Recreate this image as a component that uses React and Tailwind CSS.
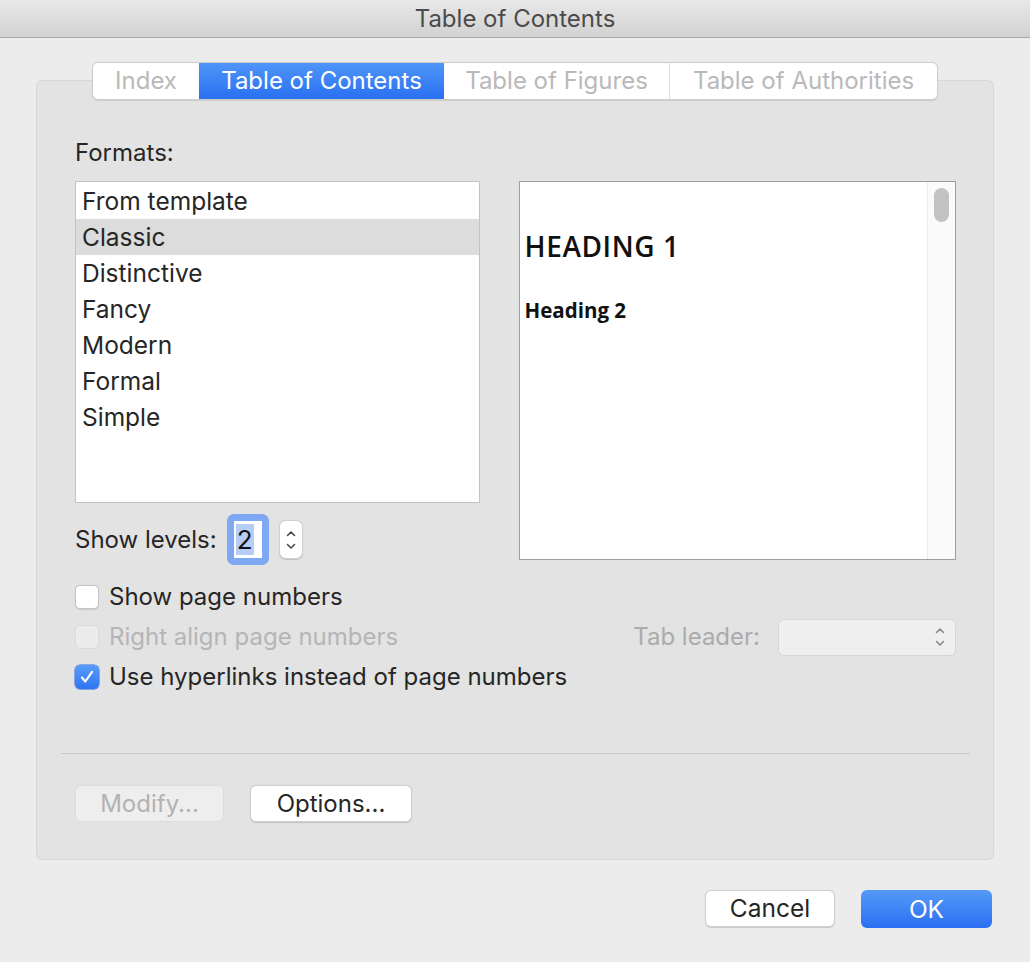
import React from "react";

const font = { fontFamily: "Inter, 'Helvetica Neue', Arial, sans-serif" };

function Checkbox({ checked, disabled }) {
  if (checked) {
    return (
      <div className="w-[24px] h-[24px] rounded-[5px] bg-gradient-to-b from-[#5a9cf9] to-[#2f74f1] flex items-center justify-center shadow-[0_0_0_0.5px_#2a66d8]">
        <svg width="18" height="18" viewBox="0 0 16 16" fill="none">
          <path d="M3.5 8.5 L6.5 12 L12.5 3.5" stroke="white" strokeWidth="1.9" strokeLinecap="round" strokeLinejoin="round" />
        </svg>
      </div>
    );
  }
  return (
    <div
      className={
        "w-[24px] h-[24px] rounded-[5px] border " +
        (disabled ? "bg-[#ececec] border-[#dadada]" : "bg-white border-[#c4c4c4] shadow-[0_0.5px_1px_rgba(0,0,0,0.12)]")
      }
    />
  );
}

function UpDown({ color = "#4a4a4a" }) {
  return (
    <svg width="12" height="26" viewBox="0 0 12 26" fill="none">
      <path d="M2.5 8.5 L6 5 L9.5 8.5" stroke={color} strokeWidth="1.6" strokeLinecap="round" strokeLinejoin="round" />
      <path d="M2.5 17.5 L6 21 L9.5 17.5" stroke={color} strokeWidth="1.6" strokeLinecap="round" strokeLinejoin="round" />
    </svg>
  );
}

export default function App() {
  const formats = ["From template", "Classic", "Distinctive", "Fancy", "Modern", "Formal", "Simple"];
  return (
    <div className="w-[1030px] h-[962px] bg-[#ececec] text-[#262626] overflow-hidden" style={font}>
      {/* Title bar */}
      <div className="h-[38px] bg-gradient-to-b from-[#e8e8e8] to-[#d2d2d2] border-b border-[#a8a8a8] flex items-center justify-center">
        <span className="text-[24px] text-[#4b4b4b] leading-none">Table of Contents</span>
      </div>

      <div className="px-[36px] pt-[24px]">
        {/* Tabs */}
        <div className="relative z-10 flex justify-center h-[38px]">
          <div className="flex h-[38px] rounded-[6px] border border-[#cdcdcd] bg-white overflow-hidden shadow-[0_0.5px_1px_rgba(0,0,0,0.1)] text-[24px] leading-none">
            <div className="w-[106px] flex items-center justify-center text-[#b9b9b9]">Index</div>
            <div className="w-[245px] flex items-center justify-center text-white bg-gradient-to-b from-[#4f95f8] to-[#2a6ff1]">Table of Contents</div>
            <div className="w-[226px] flex items-center justify-center text-[#b9b9b9] border-r border-[#e0e0e0]">Table of Figures</div>
            <div className="w-[267px] flex items-center justify-center text-[#b9b9b9]">Table of Authorities</div>
          </div>
        </div>

        {/* Panel */}
        <div className="-mt-[20px] h-[780px] bg-[#e3e3e3] border border-[#d8d8d8] rounded-[6px] pl-[38px] pr-[37px] pt-[57px] pb-[37px] flex flex-col">
          <div className="h-[30px] flex items-center text-[24px] leading-none">Formats:</div>
          <div className="mt-[14px] flex gap-[39px] items-start">
            <div className="w-[405px]">
              <div className="h-[322px] bg-white border border-[#c2c2c2] pt-[1px]">
                {formats.map((f) => (
                  <div
                    key={f}
                    className={"h-[36px] flex items-center pl-[6px] text-[24.5px] leading-none " + (f === "Classic" ? "bg-[#dcdcdc]" : "")}
                  >
                    {f}
                  </div>
                ))}
              </div>
              <div className="mt-[11px] h-[51px] flex items-center">
                <span className="text-[24px] leading-none">Show levels:</span>
                <div className="ml-[10px] w-[42px] h-[51px] rounded-[7px] bg-[#7ea8f1] p-[7px] flex">
                  <div className="flex-1 bg-white flex items-center justify-start pl-[2px]">
                    <span className="bg-[#b6cdf6] text-[#111] text-[26px] leading-[30px] px-[1px] h-[31px] flex items-center">2</span>
                  </div>
                </div>
                <div className="ml-[10px] w-[24px] h-[39px] bg-white rounded-[7px] border border-[#d0d0d0] shadow-[0_0.5px_1px_rgba(0,0,0,0.15)] flex items-center justify-center">
                  <UpDown />
                </div>
              </div>
            </div>
            <div className="w-[438px] h-[379px] bg-white border border-[#9e9e9e] flex">
              <div className="flex-1 pl-[5px] pt-[50px]">
                <div className="text-[28px] leading-none font-semibold tracking-[0.6px] text-[#111]" style={{ fontFamily: "'Open Sans', sans-serif" }}>
                  HEADING 1
                </div>
                <div className="mt-[40px] text-[20.5px] leading-none font-bold text-[#111]" style={{ fontFamily: "'Open Sans', sans-serif" }}>
                  Heading 2
                </div>
              </div>
              <div className="w-[28px] bg-[#fafafa] border-l border-[#ececec] pt-[6px] flex justify-center">
                <div className="w-[15px] h-[34px] rounded-full bg-[#c2c2c2]" />
              </div>
            </div>
          </div>

          {/* Checkbox rows */}
          <div className="mt-[12px] flex flex-col">
            <div className="h-[40px] flex items-center gap-[10px]">
              <Checkbox />
              <span className="text-[24px] leading-none">Show page numbers</span>
            </div>
            <div className="h-[40px] flex items-center gap-[10px]">
              <Checkbox disabled />
              <span className="text-[24px] leading-none text-[#b5b5b5]">Right align page numbers</span>
              <span className="ml-auto text-[24px] leading-none text-[#ababab]">Tab leader:</span>
              <div className="ml-[8px] w-[178px] h-[37px] rounded-[6px] bg-[#efefef] border border-[#d6d6d6] flex items-center justify-end pr-[9px]">
                <UpDown color="#8a8a8a" />
              </div>
            </div>
            <div className="h-[40px] flex items-center gap-[10px]">
              <Checkbox checked />
              <span className="text-[24px] leading-none">Use hyperlinks instead of page numbers</span>
            </div>
          </div>

          <div className="mt-[56px] -ml-[14px] -mr-[14px] h-px bg-[#c8c8c8]" />

          <div className="mt-[31px] flex gap-[26px]">
            <div className="w-[149px] h-[37px] rounded-[6px] bg-[#eeeeee] border border-[#dcdcdc] flex items-center justify-center text-[24px] leading-none text-[#b2b2b2]">
              Modify...
            </div>
            <div className="w-[162px] h-[37px] rounded-[6px] bg-white border border-[#cfcfcf] shadow-[0_0.5px_1px_rgba(0,0,0,0.15)] flex items-center justify-center text-[24px] leading-none">
              Options...
            </div>
          </div>
        </div>

        {/* Bottom buttons */}
        <div className="mt-[30px] flex justify-end gap-[26px] pr-[2px]">
          <div className="w-[130px] h-[37px] rounded-[6px] bg-white border border-[#cfcfcf] shadow-[0_0.5px_1px_rgba(0,0,0,0.15)] flex items-center justify-center text-[24.5px] leading-none">
            Cancel
          </div>
          <div className="w-[131px] h-[38px] rounded-[6px] bg-gradient-to-b from-[#5599f8] to-[#2b6ff1] flex items-center justify-center text-[24.5px] leading-none text-white">
            OK
          </div>
        </div>
      </div>
    </div>
  );
}
